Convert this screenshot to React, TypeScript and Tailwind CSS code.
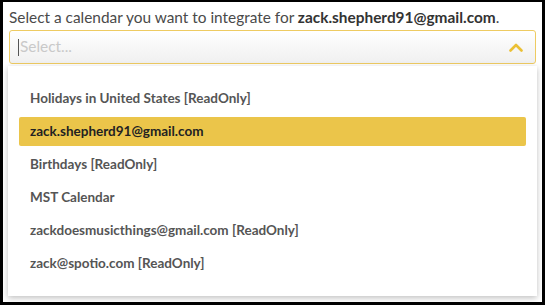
const calendars = [
  'Holidays in United States [ReadOnly]',
  'zack.shepherd91@gmail.com',
  'Birthdays [ReadOnly]',
  'MST Calendar',
  'zackdoesmusicthings@gmail.com [ReadOnly]',
  'zack@spotio.com [ReadOnly]',
];

export default function App() {
  const active = 1;

  return (
    <div className="w-[545px] h-[305px] bg-black px-[3px] pt-[2px] pb-[3px]">
      <div className="relative h-full bg-white px-[6px] font-['Lato',sans-serif]">
        <p className="pt-[5px] text-[15.4px] leading-[20px] text-[#4a4a4a]">
          Select a calendar you want to integrate for{' '}
          <span className="font-bold text-[#333]">zack.shepherd91@gmail.com</span>.
        </p>

        {/* Select control */}
        <div className="mt-[3px] h-[34px] flex items-center rounded-[3px] border border-[#eecb62] bg-gradient-to-b from-white to-[#f0f0f0] pl-[8px] pr-[12px]">
          <span className="w-px h-[17px] bg-[#555]" />
          <span className="ml-[1px] flex-1 text-[15.4px] text-[#c9c9c9]">Select...</span>
          <svg width="14" height="9" viewBox="0 0 14 9" fill="none">
            <polyline
              points="1.5,7.5 7,2 12.5,7.5"
              stroke="#ebc034"
              strokeWidth="2.6"
              strokeLinecap="round"
              strokeLinejoin="round"
            />
          </svg>
        </div>

        {/* Open menu */}
        <div className="absolute left-[5px] right-[5px] top-[64px] bottom-[6px] bg-white shadow-[0_2px_6px_rgba(0,0,0,0.25)] px-[11px] pt-[18px] flex flex-col gap-[4px]">
          {calendars.map((name, i) => (
            <div
              key={name}
              className={
                i === active
                  ? 'h-[29px] flex items-center rounded-[2px] bg-[#ebc54a] px-[11px] text-[13.5px] font-bold text-[#222]'
                  : 'h-[29px] flex items-center px-[11px] text-[13.5px] font-bold text-[#555]'
              }
            >
              {name}
            </div>
          ))}
        </div>
      </div>
    </div>
  );
}
